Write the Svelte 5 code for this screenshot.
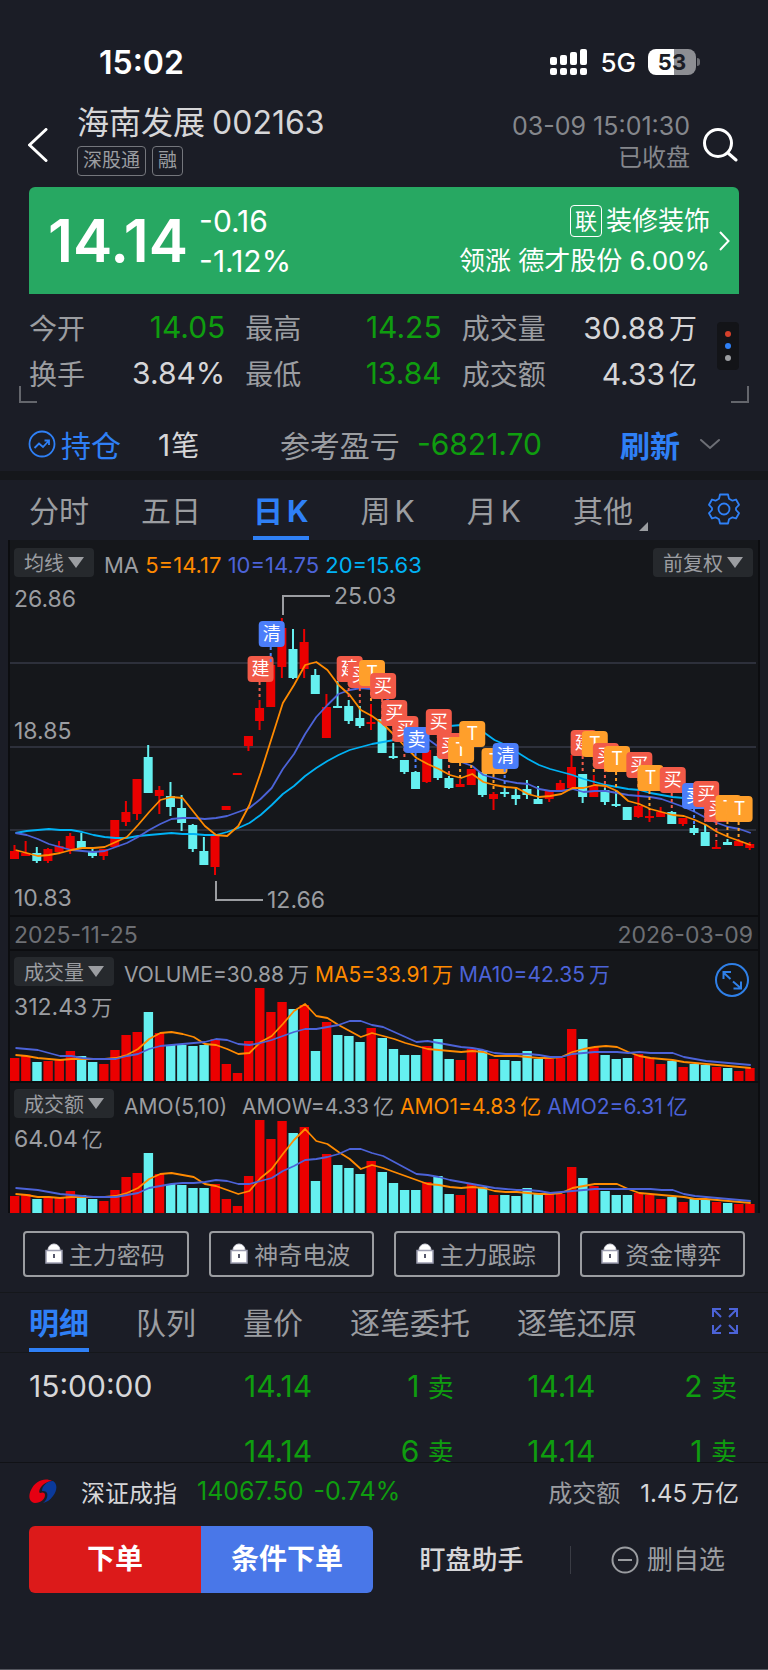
<script>
  const quotes = [
    [
      { label: "今开", value: "14.05", down: true },
      { label: "换手", value: "3.84%" },
    ],
    [
      { label: "最高", value: "14.25", down: true },
      { label: "最低", value: "13.84", down: true },
    ],
    [
      { label: "成交量", value: "30.88", unit: "万" },
      { label: "成交额", value: "4.33", unit: "亿" },
    ],
  ];

  const periods = ["分时", "五日", "日K", "周K", "月K", "其他"];
  const details = ["明细", "队列", "量价", "逐笔委托", "逐笔还原"];
  const locked = ["主力密码", "神奇电波", "主力跟踪", "资金博弈"];

  let period = $state("日K");
  let detail = $state("明细");

  const trades = [
    { time: "15:00:00", cells: ["14.14", "1", "14.14", "2"] },
    { time: "", cells: ["14.14", "6", "14.14", "1"] },
  ];

  // high, body top, body bottom, low, up
  const candles = [
    [265, 271, 279, 279, 1], [261, 273, 276, 276, 1], [267, 273, 281, 283, 0],
    [268, 269, 281, 283, 1], [261, 266, 272, 272, 1], [253, 256, 269, 274, 1],
    [253, 261, 269, 269, 0], [268, 271, 276, 278, 0], [269, 269, 276, 280, 1],
    [240, 240, 267, 267, 1], [221, 232, 242, 246, 1], [199, 199, 234, 240, 1],
    [165, 177, 213, 213, 0], [206, 210, 216, 234, 1], [202, 216, 227, 236, 0],
    [215, 228, 243, 251, 0], [244, 245, 269, 272, 0], [257, 271, 285, 285, 0],
    [256, 256, 287, 295, 1], [226, 226, 230, 230, 1], [193, 193, 195, 195, 1],
    [156, 156, 166, 171, 1], [120, 128, 141, 150, 1], [85, 85, 127, 127, 1],
    [38, 48, 87, 98, 1], [49, 69, 98, 99, 0], [49, 62, 89, 98, 1],
    [89, 95, 114, 114, 0], [114, 127, 158, 158, 1], [101, 126, 128, 128, 0],
    [120, 126, 141, 144, 0], [126, 138, 146, 148, 0], [124, 142, 144, 150, 1],
    [139, 139, 173, 173, 0], [163, 176, 178, 179, 0], [180, 180, 192, 194, 0],
    [191, 192, 209, 209, 0], [170, 170, 202, 203, 1], [176, 176, 198, 200, 0],
    [196, 198, 208, 209, 0], [199, 204, 207, 207, 1], [189, 189, 205, 205, 1],
    [192, 192, 215, 217, 0], [212, 214, 219, 230, 1], [206, 212, 214, 217, 0],
    [208, 215, 219, 225, 0], [200, 209, 215, 219, 0], [206, 219, 224, 224, 0],
    [211, 211, 219, 222, 1], [200, 203, 211, 211, 1], [175, 187, 208, 208, 1],
    [194, 194, 217, 223, 0], [195, 206, 217, 217, 1], [208, 210, 222, 225, 0],
    [210, 224, 226, 227, 0], [227, 227, 240, 240, 0], [210, 226, 237, 238, 1],
    [230, 236, 238, 242, 1], [227, 232, 237, 237, 1], [231, 232, 244, 244, 0],
    [238, 238, 244, 246, 1], [245, 248, 253, 255, 0], [244, 252, 266, 266, 0],
    [261, 267, 269, 269, 1], [259, 262, 265, 265, 0], [259, 261, 266, 266, 1],
    [262, 264, 268, 270, 1],
  ];

  const ma5 = [
    270, 273, 276, 275, 273, 270, 268, 268, 267, 262, 257, 245, 232, 220, 217, 218, 232, 246, 255,
    256, 246, 225, 193, 158, 123, 105, 85, 82, 90, 105, 115, 130, 136, 144, 155, 167, 178, 184,
    189, 195, 198, 194, 202, 205, 207, 208, 214, 217, 216, 214, 208, 208, 205, 206, 211, 221, 224,
    229, 232, 235, 236, 240, 245, 252, 257, 261, 265,
  ];
  const ma10 = [
    253, 255, 259, 264, 267, 270, 271, 272, 271, 267, 263, 257, 250, 244, 239, 238, 238, 239, 238,
    236, 232, 228, 219, 208, 189, 174, 154, 137, 125, 114, 110, 108, 109, 115, 126, 138, 150, 159,
    167, 173, 182, 186, 195, 198, 201, 203, 204, 209, 211, 211, 209, 212, 211, 211, 213, 215, 216,
    217, 219, 223, 227, 232, 238, 243, 247, 249, 253,
  ];
  const ma20 = [
    253, 251, 250, 249, 250, 250, 252, 255, 257, 258, 258, 256, 255, 254, 253, 254, 254, 255, 255,
    252, 248, 243, 235, 225, 214, 206, 196, 188, 181, 175, 170, 167, 164, 162, 160, 157, 154, 151,
    148, 146, 145, 147, 152, 160, 165, 172, 179, 185, 189, 192, 195, 199, 202, 205, 207, 209, 210,
    213, 215, 217, 218, 219, 222, 225, 228, 231, 233,
  ];

  // day, top of the badge, label
  const marks = [
    [22, 76, "建"], [23, 41, "清"], [30, 76, "建"], [31, 82, "买"], [32, 80, "T"],
    [33, 93, "买"], [34, 120, "买"], [35, 136, "买"], [36, 147, "卖"], [38, 129, "买"],
    [39, 153, "买"], [40, 157, "T"], [41, 141, "T"], [43, 168, "T"], [44, 163, "清"],
    [51, 150, "建"], [52, 151, "T"], [53, 163, "买"], [54, 166, "T"], [56, 172, "买"],
    [57, 185, "T"], [59, 187, "买"], [61, 203, "卖"], [62, 201, "买"], [63, 216, "买"],
    [64, 215, "T"], [65, 216, "T"],
  ];
  const markColors = { 建: "#f25a48", 买: "#f25a48", 清: "#4b7efa", 卖: "#4b7efa", T: "#ff9f2b" };

  const studies = [
    {
      name: "成交量",
      max: "312.43",
      unit: "万",
      expand: true,
      legend: [
        { text: "VOLUME=30.88", unit: "万" },
        { text: "MA5=33.91", unit: "万", tone: "orange" },
        { text: "MA10=42.35", unit: "万", tone: "indigo" },
      ],
      bars: [
        23, 25, 19, 20, 21, 30, 25, 19, 17, 31, 46, 49, 69, 48, 36, 36, 35, 36, 42, 17, 8, 40, 93,
        69, 79, 72, 76, 30, 59, 46, 45, 39, 53, 43, 32, 26, 26, 35, 42, 22, 21, 32, 31, 22, 21, 20,
        30, 22, 22, 23, 52, 42, 34, 26, 22, 23, 27, 23, 17, 20, 14, 17, 16, 14, 13, 10, 13,
      ],
      fast: [
        67, 68, 70, 71, 72, 71, 71, 71, 71, 70, 67, 61, 51, 45, 44, 46, 49, 56, 57, 61, 66, 65, 54,
        48, 36, 23, 16, 28, 30, 37, 43, 49, 45, 48, 51, 55, 58, 61, 62, 63, 64, 63, 64, 68, 68, 68,
        69, 70, 70, 69, 64, 61, 59, 58, 59, 64, 68, 70, 71, 72, 74, 75, 76, 77, 78, 79, 80,
      ],
      slow: [
        60, 61, 62, 65, 68, 68, 70, 71, 71, 71, 68, 66, 61, 58, 57, 56, 55, 54, 51, 52, 56, 57, 55,
        52, 48, 44, 41, 41, 39, 37, 33, 33, 37, 39, 44, 49, 54, 53, 55, 57, 59, 60, 62, 65, 66, 66,
        66, 67, 69, 69, 66, 65, 64, 64, 64, 65, 64, 65, 65, 65, 69, 71, 73, 74, 75, 76, 77,
      ],
    },
    {
      name: "成交额",
      max: "64.04",
      unit: "亿",
      legend: [
        { text: "AMO(5,10)", wide: true },
        { text: "AMOW=4.33", unit: "亿" },
        { text: "AMO1=4.83", unit: "亿", tone: "orange" },
        { text: "AMO2=6.31", unit: "亿", tone: "indigo" },
      ],
      bars: [
        17, 19, 14, 15, 16, 22, 18, 14, 12, 23, 36, 40, 60, 39, 29, 28, 25, 25, 29, 14, 7, 37, 93,
        74, 92, 80, 86, 32, 59, 48, 45, 39, 52, 41, 30, 23, 23, 31, 37, 19, 18, 29, 26, 18, 18, 17,
        25, 19, 19, 19, 46, 35, 27, 22, 18, 18, 20, 18, 14, 16, 11, 14, 13, 11, 10, 9, 9,
      ],
      fast: [
        74, 75, 77, 77, 78, 77, 77, 77, 77, 76, 73, 68, 59, 54, 53, 55, 57, 64, 66, 70, 74, 71, 58,
        49, 34, 20, 9, 21, 24, 32, 39, 49, 45, 48, 52, 56, 60, 64, 65, 67, 68, 67, 68, 71, 72, 72,
        73, 74, 74, 73, 68, 66, 64, 64, 64, 69, 73, 74, 75, 76, 77, 79, 79, 80, 81, 82, 83,
      ],
      slow: [
        68, 69, 70, 72, 74, 75, 76, 77, 77, 77, 75, 73, 68, 66, 64, 63, 63, 62, 60, 61, 64, 64, 61,
        58, 51, 46, 40, 39, 37, 34, 29, 29, 33, 36, 42, 48, 54, 55, 57, 60, 62, 64, 66, 68, 69, 70,
        70, 71, 73, 72, 71, 70, 69, 69, 69, 69, 69, 69, 70, 70, 74, 76, 77, 78, 79, 80, 81,
      ],
    },
  ];

  const x = (i) => 4.5 + i * 11.14;
  const line = (values) => values.map((v, i) => `${x(i) + 1},${v}`).join(" ");
  const color = (i) => (candles[i][4] ? "#eb0000" : "#65f0f0");
</script>

<main>
  <div class="status">
    <span class="clock">15:02</span>
    <svg class="signal" viewBox="0 0 38 26" width="38" height="26" fill="#fff" aria-hidden="true">
      <rect x="0" y="8" width="7" height="8" rx="2" />
      <rect x="10" y="6" width="7" height="10" rx="2" />
      <rect x="20" y="3" width="7" height="13" rx="2" />
      <rect x="30" y="0" width="7" height="16" rx="2" />
      {#each [0, 10, 20, 30] as dot}
        <rect x={dot} y="19" width="7" height="7" rx="2" />
      {/each}
    </svg>
    <span class="network">5G</span>
    <span class="battery">53</span>
  </div>

  <header>
    <button class="icon" aria-label="返回">
      <svg viewBox="0 0 20 34" width="20" height="34" fill="none" stroke="#fff" stroke-width="3" stroke-linecap="round" stroke-linejoin="round">
        <path d="M18 1.500 1.500 17 18 32.500" />
      </svg>
    </button>
    <div class="stock">
      <h1>海南发展<span>002163</span></h1>
      <div class="tags"><span>深股通</span><span>融</span></div>
    </div>
    <div class="time">
      <div>03-09 15:01:30</div>
      <div class="closed">已收盘</div>
    </div>
    <button class="icon" aria-label="搜索">
      <svg viewBox="0 0 36 34" width="36" height="34" fill="none" stroke="#fff" stroke-width="3" stroke-linecap="round">
        <circle cx="16" cy="15" r="13.500" />
        <path d="M26 25 34 32" />
      </svg>
    </button>
  </header>

  <section class="card">
    <strong>14.14</strong>
    <div class="change">
      <div>-0.16</div>
      <div>-1.12%</div>
    </div>
    <a class="sector" href="#sector">
      <div><span class="linked">联</span>装修装饰</div>
      <div>领涨 德才股份 6.00%</div>
    </a>
    <svg viewBox="0 0 11 20" width="11" height="20" fill="none" stroke="#fff" stroke-width="2" aria-hidden="true">
      <path d="M1 1 9.500 10 1 19" />
    </svg>
  </section>

  <section class="quotes">
    <div class="columns">
      {#each quotes as column}
        <dl>
          {#each column as q}
            <div>
              <dt>{q.label}</dt>
              <dd class:down={q.down}>{q.value}{#if q.unit}<span class="unit">{q.unit}</span>{/if}</dd>
            </div>
          {/each}
        </dl>
      {/each}
    </div>
    <button class="more" aria-label="更多"><i></i><i></i><i></i></button>
  </section>

  <section class="position">
    <svg viewBox="0 0 28 28" width="28" height="28" fill="none" stroke="#2f80f6" stroke-width="1.800" aria-hidden="true">
      <circle cx="14" cy="14" r="12.500" />
      <path d="M6.500 18 11 13.500 15 17 21 10.500M16.500 10.500H21V15" />
    </svg>
    <a href="#position">持仓</a>
    <span class="count">1<span class="unit">笔</span></span>
    <span class="pl-label">参考盈亏</span>
    <span class="down">-6821.70</span>
    <button class="refresh">刷新</button>
    <svg viewBox="0 0 20 12" width="20" height="12" fill="none" stroke="#6d6f76" stroke-width="2" stroke-linecap="round" aria-hidden="true">
      <path d="M1 2 10 10 19 2" />
    </svg>
  </section>

  <nav class="periods">
    {#each periods as name}
      <button class:active={period === name} class:menu={name === "其他"} onclick={() => (period = name)}>
        {#if name.endsWith("K")}{name[0]}<span class="k">K</span>{:else}{name}{/if}
      </button>
    {/each}
    <button class="gear" aria-label="设置">
      <svg viewBox="0 0 32 32" width="32" height="32" fill="none" stroke="#2f80f6" stroke-width="1.800" stroke-linejoin="round">
        <path d="M12 1.500H20L21 5.700 24.500 7.700 28 6.500 31 11.800 28 15V17L31 20.200 28 25.500 24.500 24.300 21 26.300 20 30.500H12L11 26.300 7.500 24.300 4 25.500 1 20.200 4 17V15L1 11.800 4 6.500 7.500 7.700 11 5.700Z" />
        <circle cx="16" cy="16" r="5.500" />
      </svg>
    </button>
  </nav>

  <section class="charts">
    <div class="toolbar">
      <button>均线<i></i></button>
      <p>MA <span class="orange">5=14.17</span> <span class="indigo">10=14.75</span> <span class="sky">20=15.63</span></p>
      <button>前复权<i></i></button>
    </div>
    <svg class="plot" viewBox="0 0 748 335" role="img" aria-label="日K">
      <path d="M0 83H746M0 167H746M0 250H746" stroke="#2d303b" stroke-width="2" />
      {#each candles as [high, top, bottom, low], i}
        <rect x={x(i) - 1} y={high} width="2" height={low - high} fill={color(i)} />
        <rect x={x(i) - 4.5} y={top} width="9" height={bottom - top} fill={color(i)} />
      {/each}
      <g fill="none" stroke-width="1.800" stroke-linejoin="round">
        <polyline points={line(ma20)} stroke="#00b2f5" />
        <polyline points={line(ma10)} stroke="#4c63d8" />
        <polyline points={line(ma5)} stroke="#ff8a00" />
      </g>
      <g class="axis">
        <text x="4" y="27">26.86</text>
        <text x="4" y="159">18.85</text>
        <text x="4" y="326">10.83</text>
        <text x="324" y="24">25.03</text>
        <text x="257" y="328">12.66</text>
      </g>
      <path d="M273 35V16H320M206 301V320H253" fill="none" stroke="#9b9da1" stroke-width="2" />
      {#each marks as [day, top, label]}
        <path d="M{x(day)} {top + 26}V{Math.max(top + 26, candles[day][0])}" stroke={markColors[label]} stroke-width="2" stroke-dasharray="3 3" />
        <rect x={x(day) - 12} y={top} width="26" height="26" rx="4" fill={markColors[label]} />
        <text class="mark" x={x(day) + 1} y={top + 19}>{label}</text>
      {/each}
    </svg>
    <div class="dates"><span>2025-11-25</span><span>2026-03-09</span></div>

    {#each studies as study}
      <div class="study">
        <div class="toolbar">
          <button>{study.name}<i></i></button>
          <p>
            {#each study.legend as item}
              <span class={item.tone} class:wide={item.wide}>{item.text}{#if item.unit}<span class="unit">{item.unit}</span>{/if}</span>{" "}
            {/each}
          </p>
          {#if study.expand}
            <button class="expand" aria-label="全屏">
              <svg viewBox="0 0 36 36" width="36" height="36" fill="none" stroke="#2f80e8" stroke-width="2">
                <circle cx="18" cy="18" r="16" />
                <path d="M16.500 17 10 11M9.500 17V10H17M19 19.500 26 25.500M27 19.500V26.500H19.500" />
              </svg>
            </button>
          {/if}
        </div>
        <svg class="plot" viewBox="0 0 748 93" role="img" aria-label={study.name}>
          {#each study.bars as height, i}
            <rect x={x(i) - 4.5} y={93 - height} width="9.400" {height} fill={color(i)} />
          {/each}
          <g fill="none" stroke-width="1.800" stroke-linejoin="round">
            <polyline points={line(study.fast)} stroke="#ff8a00" />
            <polyline points={line(study.slow)} stroke="#4c63d8" />
          </g>
          <text class="axis" x="4" y="27">{study.max}<tspan class="axis-unit" dx="4">{study.unit}</tspan></text>
        </svg>
      </div>
    {/each}
  </section>

  <section class="locked">
    {#each locked as name}
      <button>
        <svg viewBox="0 0 18 21" width="18" height="21" aria-hidden="true">
          <path d="M3 8V7a6 6 0 0 1 12 0v1Z" fill="#fff" stroke="#d8d9e2" />
          <rect x="1" y="7.500" width="16" height="12.500" fill="#fff" stroke="#9c9db0" stroke-width="1.500" />
          <path d="M9 11v4" stroke="#55576a" stroke-width="2" />
        </svg>
        {name}
      </button>
    {/each}
  </section>

  <nav class="details">
    {#each details as name}
      <button class:active={detail === name} onclick={() => (detail = name)}>{name}</button>
    {/each}
    <button class="zoom" aria-label="展开">
      <svg viewBox="0 0 26 26" width="26" height="26" fill="none" stroke="#4c63d8" stroke-width="2">
        <path d="M1 9V1H9M1 1 9 9M17 1H25V9M25 1 17 9M1 17V25H9M1 25 9 17M25 17V25H17M25 25 17 17" />
      </svg>
    </button>
  </nav>

  <div class="trades">
    <table>
      <tbody>
        {#each trades as { time, cells }}
          <tr>
            <td class="at">{time}</td>
            <td>{cells[0]}</td>
            <td>{cells[1]} <span class="side">卖</span></td>
            <td>{cells[2]}</td>
            <td>{cells[3]} <span class="side">卖</span></td>
          </tr>
        {/each}
      </tbody>
    </table>
  </div>

  <footer>
    <div class="index">
      <svg viewBox="0 0 28 26" width="28" height="26" aria-hidden="true">
        <path d="M23 3C16-1 6 3 2 12-1 18 0 24 6 25c6 0 10-4 10-8 0-3-3-3-5-2-2-1 0-6 4-9 3-2 6-3 8-3Z" fill="#e60012" />
        <path d="M24 3c5 3 4 10 0 15-3 4-6 6-10 7 4-3 5-7 4-10-1-2-4-2-5-2 0-5 5-10 11-10Z" fill="#0b3a9b" />
      </svg>
      <span class="index-name">深证成指</span>
      <span class="down">14067.50</span>
      <span class="down">-0.74%</span>
      <span class="turnover">成交额</span>
      <span>1.45<span class="unit">万亿</span></span>
    </div>
    <div class="actions">
      <div class="order">
        <button>下单</button>
        <button>条件下单</button>
      </div>
      <button class="helper">盯盘助手</button>
      <button class="remove">
        <svg viewBox="0 0 28 28" width="28" height="28" fill="none" stroke="#9b9da1" stroke-width="2" aria-hidden="true">
          <circle cx="14" cy="14" r="12.500" />
          <path d="M7 14H21" />
        </svg>
        删自选
      </button>
    </div>
  </footer>
</main>

<style>
  :global(body) {
    margin: 0;
    background: #1b1d26;
  }

  main {
    border-bottom: 1px solid #55565e;
    font-family: Inter, "Noto Sans CJK SC", sans-serif;
    font-size: 30px;
    color: #d6d6d8;
    background: #1b1d26;
    overflow: hidden;
  }

  button {
    padding: 0;
    border: 0;
    background: none;
    color: inherit;
    font: inherit;
    cursor: pointer;
  }

  a {
    color: inherit;
    text-decoration: none;
  }

  svg {
    display: block;
    flex: none;
  }

  .unit {
    margin-left: 4px;
  }

  .down {
    color: #0f9d0f;
  }

  .orange {
    color: #ff8a00;
  }

  .indigo {
    color: #4c63d8;
  }

  .sky {
    color: #00b2f5;
  }

  .status {
    display: flex;
    align-items: center;
    height: 36px;
    padding: 44px 72px 23px 99px;
    color: #fff;
  }

  .clock {
    flex: 1;
    font-size: 32px;
    font-weight: 600;
  }

  .network {
    margin: 0 12px;
    font-size: 26px;
    font-weight: 500;
  }

  .battery {
    position: relative;
    width: 48px;
    border-radius: 8px;
    background: linear-gradient(90deg, #fff 54%, #8d8e93 54%);
    color: #1b1d26;
    font-size: 22px;
    font-weight: 700;
    line-height: 26px;
    text-align: center;
  }

  .battery::after {
    content: "";
    position: absolute;
    left: 49px;
    top: 9px;
    width: 3px;
    height: 8px;
    border-radius: 0 4px 4px 0;
    background: #6c6d73;
  }

  header {
    display: flex;
    align-items: center;
    height: 84px;
    padding: 0 30px 0 28px;
  }

  .stock {
    flex: 1;
    align-self: flex-start;
    margin-left: 29px;
  }

  h1 {
    margin: 0 0 3px;
    font-size: 32px;
    font-weight: 400;
    line-height: 40px;
    white-space: nowrap;
  }

  h1 span {
    margin-left: 7px;
  }

  .tags {
    display: flex;
    gap: 6px;
  }

  .tags span {
    padding: 0 5px;
    border: 1px solid #74767c;
    border-radius: 4px;
    color: #9b9da1;
    font-size: 19px;
    line-height: 28px;
  }

  .time {
    margin: 0 12px 6px 0;
    color: #85878c;
    font-size: 25px;
    line-height: 32px;
    text-align: right;
  }

  .closed {
    font-size: 24px;
  }

  .card {
    display: flex;
    align-items: center;
    margin: 0 29px;
    padding: 14px 9px 13px 19px;
    border-radius: 6px 6px 0 0;
    background: #27a862;
    color: #fff;
    line-height: 40px;
  }

  .card strong {
    font-size: 59px;
    font-weight: 600;
  }

  .change {
    flex: 1;
    margin-left: 11px;
  }

  .sector {
    margin-right: 9px;
    font-size: 26px;
    text-align: right;
  }

  .linked {
    display: inline-block;
    margin-right: 4px;
    padding: 0 4px;
    border: 1px solid #fff;
    border-radius: 4px;
    font-size: 22px;
    line-height: 30px;
    vertical-align: 1px;
  }

  .quotes {
    position: relative;
    display: flex;
    align-items: center;
    gap: 20px;
    margin: 0 19px;
    padding: 10px 10px 7px;
  }

  .quotes::before,
  .quotes::after {
    content: "";
    position: absolute;
    bottom: 0;
    width: 16px;
    height: 15px;
    border-bottom: 2px solid #64666c;
  }

  .quotes::before {
    left: 0;
    border-left: 2px solid #64666c;
  }

  .quotes::after {
    right: 0;
    border-right: 2px solid #64666c;
  }

  .columns {
    flex: 1;
    display: grid;
    grid-template-columns: 196fr 196fr 235fr;
    gap: 20px;
  }

  dl {
    margin: 0;
  }

  dl div {
    display: flex;
    align-items: center;
    justify-content: space-between;
    height: 46px;
  }

  dt,
  dd .unit {
    font-size: 28px;
  }

  dt {
    color: #9b9da1;
  }

  dd {
    margin: 0;
  }

  .more {
    display: flex;
    flex-direction: column;
    align-items: center;
    justify-content: center;
    gap: 6px;
    width: 22px;
    height: 48px;
    margin-bottom: 8px;
    border-radius: 4px;
    background: #131418;
  }

  .more i {
    width: 6px;
    height: 6px;
    border-radius: 50%;
    background: #d5402b;
  }

  .more i:nth-child(2) {
    background: #2f80f6;
  }

  .more i:nth-child(3) {
    background: #9b9da1;
  }

  .position {
    display: flex;
    align-items: center;
    height: 54px;
    padding: 14px 48px 0 28px;
    border-bottom: 9px solid #15171b;
  }

  .position a {
    margin: 0 37px 0 5px;
    color: #2f80f6;
  }

  .count {
    flex: 1;
  }

  .count .unit {
    margin-left: 1px;
    font-size: 28px;
  }

  .pl-label {
    margin-right: 17px;
    color: #9b9da1;
  }

  .refresh {
    margin: 0 20px 0 78px;
    color: #2f80f6;
    font-weight: 700;
  }

  nav {
    display: flex;
    align-items: center;
    padding: 0 28px 0 29px;
    color: #9b9da1;
  }

  nav button {
    box-sizing: border-box;
    height: 60px;
    border-top: 2px solid transparent;
    border-bottom: 4px solid transparent;
    white-space: nowrap;
  }

  nav .active {
    border-bottom-color: #2f80f6;
    color: #2f80f6;
    font-weight: 700;
  }

  .periods {
    gap: 52px;
  }

  .k {
    margin-left: 4px;
  }

  .menu {
    position: relative;
  }

  .menu::after {
    content: "";
    position: absolute;
    right: -15px;
    bottom: 5px;
    border-left: 9px solid transparent;
    border-bottom: 9px solid #9b9da1;
  }

  .gear,
  .zoom {
    margin-left: auto;
  }

  .details {
    gap: 47px;
    border-top: 1px solid #15171b;
    border-bottom: 1px solid #15171b;
  }

  .details button {
    height: 59px;
    border-top-width: 0;
  }

  .zoom {
    margin-right: 2px;
  }

  .charts {
    margin: 0 8px;
    border: solid #0c0d10;
    border-width: 0 2px;
    background: #15171b;
  }

  .toolbar {
    display: flex;
    align-items: flex-start;
    box-sizing: border-box;
    height: 37px;
    padding: 6px 5px 0 4px;
    color: #9b9da1;
    font-size: 20px;
  }

  .charts > .toolbar {
    height: 40px;
    padding-top: 8px;
  }

  .charts > .toolbar p {
    font-size: 22px;
  }

  .toolbar button {
    display: flex;
    align-items: center;
    gap: 4px;
    height: 29px;
    padding: 0 10px;
    border-radius: 4px;
    background: #26292d;
    white-space: nowrap;
  }

  .toolbar i {
    border: 8px solid transparent;
    border-top: 11px solid #9b9da1;
    border-bottom: 0;
  }

  .toolbar p {
    flex: 1;
    margin: 3px 0 0 10px;
    font-size: 21px;
    line-height: 29px;
    white-space: nowrap;
  }

  .wide {
    margin-right: 9px;
  }

  .toolbar .expand {
    height: 36px;
    margin: 5px 3px 0 0;
    padding: 0;
    background: none;
  }

  .plot {
    width: 100%;
    height: auto;
  }

  .axis {
    fill: #9b9da1;
    font-size: 23px;
  }

  .axis-unit {
    font-size: 21px;
  }

  .mark {
    fill: #fff;
    font-size: 18px;
    text-anchor: middle;
  }

  .dates {
    display: flex;
    justify-content: space-between;
    padding: 4px 5px 0 4px;
    border: solid #0c0d10;
    border-width: 2px 0;
    color: #6d6f74;
    font-size: 23px;
    line-height: 28px;
  }

  .study + .study {
    border-top: 2px solid #0c0d10;
  }

  .locked {
    display: grid;
    grid-template-columns: repeat(4, 1fr);
    gap: 20px;
    padding: 18px 23px 15px;
  }

  .locked button {
    display: flex;
    align-items: center;
    justify-content: center;
    gap: 6px;
    height: 46px;
    padding: 0 2px 2px 0;
    border: 2px solid #9b9da1;
    border-radius: 4px;
    color: #9b9da1;
    font-size: 24px;
    white-space: nowrap;
  }

  .trades {
    max-height: 109px;
    overflow: hidden;
  }

  table {
    width: 100%;
    padding: 0 31px 0 29px;
    border-spacing: 0;
    table-layout: fixed;
    color: #0f9d0f;
  }

  td {
    width: 20%;
    height: 65px;
    padding: 0;
    text-align: right;
    white-space: nowrap;
  }

  .at {
    color: #d6d6d8;
    text-align: left;
  }

  .side {
    font-size: 26px;
  }

  footer {
    padding: 0 29px 76px;
    border-top: 1px solid #111216;
  }

  .index {
    display: flex;
    align-items: center;
    height: 56px;
    font-size: 24px;
  }

  .index-name {
    margin: 0 20px 0 24px;
  }

  .index .down {
    font-size: 25px;
  }

  .index .down + .down {
    flex: 1;
    margin-left: 10px;
  }

  .turnover {
    margin-right: 20px;
    color: #9b9da1;
  }

  .actions {
    display: flex;
    align-items: center;
    margin-top: 7px;
    font-size: 26px;
  }

  .order {
    flex: 1;
    display: flex;
    max-width: 344px;
    border-radius: 6px;
    overflow: hidden;
  }

  .order button {
    flex: 1;
    background: #dc1a1a;
    color: #fff;
    font-size: 28px;
    font-weight: 700;
    line-height: 67px;
  }

  .order button + button {
    background: #4977e8;
  }

  .helper {
    margin: 0 auto;
    font-weight: 500;
    line-height: 28px;
  }

  .remove {
    display: flex;
    align-items: center;
    gap: 8px;
    margin-right: 14px;
    padding-left: 40px;
    border-left: 1px solid #3a3c44;
    color: #9b9da1;
    line-height: 28px;
  }
</style>
